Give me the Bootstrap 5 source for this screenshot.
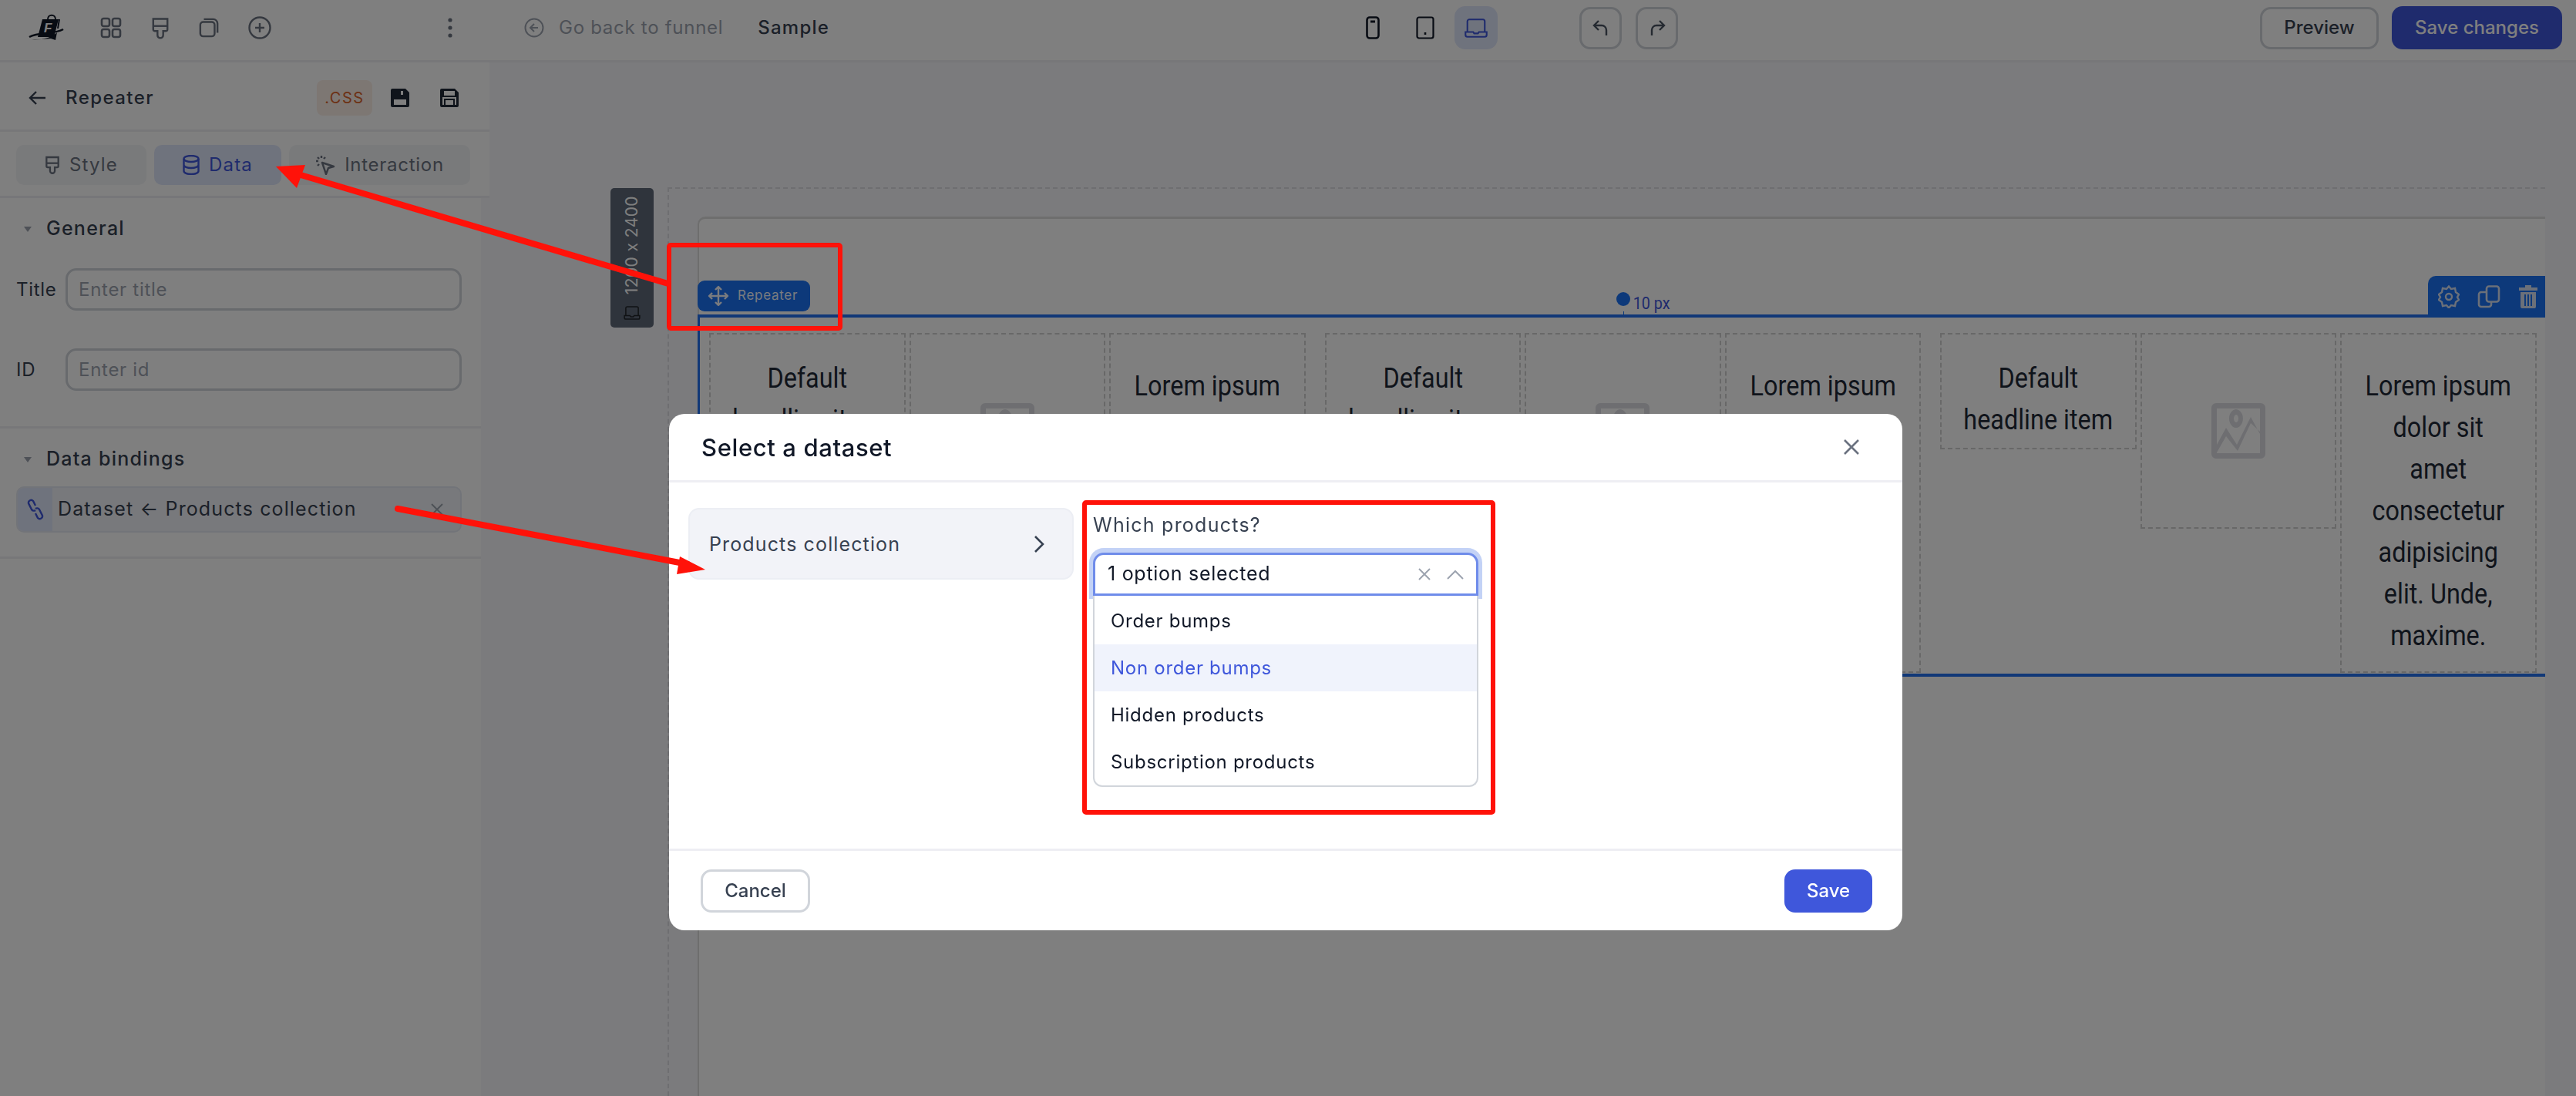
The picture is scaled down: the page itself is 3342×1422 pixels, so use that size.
<!DOCTYPE html>
<html lang="en">

<head>
    <meta charset="UTF-8">
    <meta name="viewport" content="width=device-width, initial-scale=1.0">
    <title>Repeater - Select a dataset</title>
    <link href="https://cdn.jsdelivr.net/npm/bootstrap@5.3.0/dist/css/bootstrap.min.css" rel="stylesheet">
    <style>
        html, body { height: 1422px; overflow: hidden; }
        body { font-family: Inter, "Noto Sans", sans-serif; font-size: 24px; color: #374151; letter-spacing: .03em; background: #f6f6fb; }
        svg { display: block; flex: none; }

        .top-bar { height: 81px; background: #fff; border-bottom: 3px solid #eeeef3; padding: 0 18px 6px 0; }
        .top-left { width: 1772px; padding-left: 40px; }
        .tool-icon { color: #6b7280; margin-right: 38px; }
        .logo-box { width: 90px; }
        .logo-box svg { margin-left: -10px; }
        .kebab-icon { margin-left: 229px; }
        .back-icon { margin-left: 93px; margin-right: 19px; }
        .go-back { color: #9ca3af; }
        .sample-name { font-weight: 500; margin-left: 45px; letter-spacing: .05em; }
        .device-gap { margin-right: 47px; }
        .device-on { width: 56px; height: 56px; background: #dfe6fa; border-radius: 14px; margin-left: -21px; color: #3f57db; }
        .round-btn { width: 55px; height: 55px; border: 3px solid #d1d5db; border-radius: 14px; background: #fff; color: #4b5563; padding: 0; }
        .undo-wrap { margin-left: 106px; gap: 18px; }
        .preview-btn { height: 55px; width: 154px; border: 3px solid #d1d5db; border-radius: 14px; background: #fff; color: #374151; font-size: 24px; padding: 0; font-weight: 500; }
        .save-top { height: 56px; width: 221px; border: 0; border-radius: 14px; background: #3f57db; color: #fff; font-size: 24px; padding: 0; font-weight: 500; margin-left: 17px; }

        .work-area { height: 1341px; }
        .side-panel { width: 635px; flex: none; }
        .side-row { background: #fff; border-bottom: 3px solid #eeeef3; }
        .title-row { height: 90px; padding: 4px 40px 0 37px; }
        .panel-title { margin-left: 26px; font-weight: 500; letter-spacing: .06em; }
        .css-chip { width: 72px; height: 46px; background: #fbeee6; color: #d9622a; border-radius: 8px; font-size: 20px; letter-spacing: .08em; }
        .save-one { margin-left: 24px; }
        .save-two { margin-left: 40px; }
        .tab-row { height: 86px; padding: 17px 25px 0 21px; gap: 10px; }
        .tab-item { height: 52px; border-radius: 10px; background: #f3f4f6; color: #6b7280; gap: 12px; }
        .tab-style { width: 169px; letter-spacing: .05em; }
        .tab-data { width: 165px; background: #dfe6fa; color: #3f57db; letter-spacing: .05em; }
        .tab-inter { width: 235px; }
        .side-body { width: 624px; background: #fff; height: 1165px; }
        .side-group { border-bottom: 3px solid #eeeef3; padding: 0 25px 0 21px; }
        .group-general { height: 299px; padding-top: 24px; }
        .group-data { height: 169px; padding-top: 24px; }
        .group-head { height: 32px; gap: 19px; font-size: 25px; font-weight: 500; letter-spacing: .05em; margin-bottom: 35px; }
        .group-data .group-head { margin-bottom: 19px; }
        .tri-down { width: 0; height: 0; border-left: 5px solid transparent; border-right: 5px solid transparent; border-top: 7px solid #9ca3af; margin-left: 10px; }
        .field-row { height: 55px; margin-bottom: 49px; }
        .field-label { width: 64px; flex: none; }
        .field-input { height: 55px; border: 3px solid #d1d5db; border-radius: 14px; font-size: 24px; letter-spacing: .03em; padding: 0 14px; color: #374151; }
        .field-input::placeholder { color: #9ca3af; }
        .bind-chip { height: 60px; background: #f1f3f8; border: 2px solid #e5e9f3; border-radius: 10px; overflow: hidden; }
        .bind-icon { width: 45px; background: #dfe6fa; color: #3f57db; }
        .bind-text { margin-left: 7px; font-size: 25px; letter-spacing: .045em; white-space: nowrap; }
        .bind-x { margin-left: auto; margin-right: 22px; color: #9ca3af; }

        .canvas-area { flex: 1; min-width: 0; }
        .guide-frame { margin: 162px 40px 0 231px; border-top: 2px dashed #dcdce2; border-left: 2px dashed #dcdce2; padding: 36px 0 0 37px; height: 1179px; }
        .size-tag { left: 157px; top: 163px; width: 56px; height: 181px; background: #5e6878; border-radius: 5px; color: #fff; font-size: 21px; letter-spacing: .02em; gap: 14px; padding: 12px 0; }
        .size-text { writing-mode: vertical-rl; transform: rotate(180deg); white-space: nowrap; }
        .art-board { background: #fff; border-top: 3px solid #dcdcdc; border-left: 2px solid #dcdcdc; border-top-left-radius: 10px; height: 1141px; padding-top: 124px; }
        .repeat-box { border-top: 4px solid #2371ee; border-bottom: 4px solid #2371ee; border-left: 3px solid #2371ee; margin-left: -2px; padding: 20px 11px 0 12px; height: 470px; gap: 25px; }
        .cell-group { gap: 5px; flex: none; }
        .dash-cell { width: 254.5px; flex: none; border: 2px dashed #d0d0d0; text-align: center; font-family: Roboto, sans-serif; font-size: 36px; line-height: 54px; color: #1f2937; letter-spacing: 0; align-self: flex-start; }
        .cell-lines { display: block; white-space: nowrap; transform: scaleX(.9); }
        .cell-head { padding: 30px 0 0; height: 151px; }
        .cell-image { height: 254px; }
        .cell-text { padding: 40px 0 0; height: 441px; }
        .repeater-tag { left: -3px; top: -48px; width: 146px; height: 40px; background: #1a72f5; border-radius: 9px; color: #f2f6ff; font-size: 17px; gap: 11px; padding-left: 13px; }
        .repeat-tools { right: 0; top: -54px; width: 152px; height: 54px; background: #1a72f5; border-top-left-radius: 10px; color: #d6e0f2; padding-left: 13px; gap: 23px; }
        .pad-dot { width: 18px; height: 18px; background: #1a72f5; border-radius: 50%; left: 1189px; top: -33px; }
        .pad-tick { width: 1px; height: 5px; background: #1a72f5; left: 1198px; top: -8px; }
        .pad-label { left: 1208px; top: -31px; font-size: 22px; line-height: 26px; color: #3f57db; letter-spacing: 0; font-family: Roboto, sans-serif; }

        .dim-layer { position: fixed; inset: 0; background: #000; opacity: .5; z-index: 1050; }
        .dataset-modal { display: block; overflow: hidden; }
        .dataset-dialog { max-width: 1600px; width: 1600px; margin: 537px 0 0 868px; }
        .dataset-box { border: 0; border-radius: 20px; height: 670px; }
        .dataset-head { height: 89px; border-bottom: 3px solid #eeeef3; padding: 0 55px 0 42px; }
        .dataset-title { font-size: 31px; font-weight: 500; color: #111827; letter-spacing: .02em; padding-top: 3px; }
        .dataset-main { height: 475px; padding: 33px 26px 0 25px; gap: 25px; }
        .source-item { width: 500px; height: 93px; background: #f2f3f8; border: 2px solid #eceef4; border-radius: 14px; padding: 0 36px 0 25px; font-size: 25px; letter-spacing: .045em; flex: none; }
        .source-name { padding-top: 3px; }
        .which-col { width: 500px; }
        .which-label { font-size: 25px; line-height: 30px; letter-spacing: .05em; margin-bottom: 21px; margin-top: 7px; }
        .select-focus { height: 56px; background: #fff; border: 3px solid #6f8cea; border-radius: 14px 14px 0 0; box-shadow: 0 -1px 0 5px #c3d2f6; padding: 0 16px 0 16px; color: #111827; font-size: 25px; }
        .select-x { color: #9ca3af; margin-left: auto; }
        .select-up { color: #9ca3af; margin-left: 21px; }
        .option-list { border: 2px solid #d1d5db; border-top: 0; border-radius: 0 0 12px 12px; background: #fff; overflow: hidden; position: relative; z-index: 1; padding-top: 2px; }
        .option-row { height: 61px; padding-left: 21px; font-size: 24px; color: #111827; }
        .option-row.is-active { background: #f0f3fc; color: #3f57db; }
        .dataset-foot { height: 106px; border-top: 3px solid #eeeef3; padding: 0 39px 0 41px; }
        .cancel-btn { width: 142px; height: 56px; border: 3px solid #d1d5db; border-radius: 14px; background: #fff; color: #374151; font-size: 24px; padding: 0; font-weight: 500; }
        .save-btn { width: 114px; height: 56px; border: 0; border-radius: 14px; background: #3f57db; color: #fff; font-size: 24px; padding: 0; font-weight: 500; }
        .note-layer { position: fixed; left: 0; top: 0; z-index: 1060; pointer-events: none; }
    </style>
</head>

<body>
    <svg width="0" height="0" class="position-absolute">
        <symbol id="image-ph" viewBox="0 0 70 72">
            <path fill="#dcdde3" fill-rule="evenodd" d="M6 0h58a6 6 0 0 1 6 6v60a6 6 0 0 1-6 6H6a6 6 0 0 1-6-6V6a6 6 0 0 1 6-6zM7 7v47l12-22 14 22 18-36 12 22V7zM7 65h56v-28L51 26 34 62 19 43 7 64zM32 8a9 12 0 1 1-.1 0zm0 7a3 5 0 1 0 .1 0z" />
        </symbol>
        <symbol id="laptop-ic" viewBox="0 0 24 20">
            <path fill="none" stroke="currentColor" stroke-width="1.700" d="M3 14V3a2 2 0 0 1 2-2h14a2 2 0 0 1 2 2v11M1 14h8l1 1.500h4l1-1.500h8v3a2 2 0 0 1-2 2H3a2 2 0 0 1-2-2z" />
        </symbol>
    </svg>

    <header class="top-bar d-flex align-items-center">
        <div class="top-left d-flex align-items-center">
            <div class="logo-box">
                <svg width="60" height="48" viewBox="0 0 60 48" fill="none">
                    <path d="M25 13h21l-6 23H19z" fill="#111827" />
                    <path d="M32 13c0-7 10-7 10 0" stroke="#111827" stroke-width="2" />
                    <text x="27" y="30" font-family="Liberation Sans, sans-serif" font-size="17" font-weight="700" font-style="italic" fill="#fff">F</text>
                    <path d="M8 36c12-7 32-3 44-10" stroke="#111827" stroke-width="2.600" />
                    <path d="M11 40c10 0 25-2 33-10l-2 10-6-2z" fill="#111827" />
                    <path d="M47 13l-2 12" stroke="#111827" stroke-width="2" />
                </svg>
            </div>
            <svg class="tool-icon" width="28" height="28" viewBox="0 0 28 28" fill="none" stroke="currentColor" stroke-width="2.600"><rect x="2" y="2" width="10" height="10" rx="2.500" /><rect x="16" y="2" width="10" height="10" rx="2.500" /><rect x="2" y="16" width="10" height="10" rx="2.500" /><rect x="16" y="16" width="10" height="10" rx="2.500" /></svg>
            <svg class="tool-icon" width="24" height="29" viewBox="0 0 26 30" fill="none" stroke="currentColor" stroke-width="2.600"><path d="M3 2h20v15a2 2 0 0 1-2 2h-4v6a4 4 0 0 1-8 0v-6H5a2 2 0 0 1-2-2z" /><path d="M3 12h20" /></svg>
            <svg class="tool-icon" width="26" height="28" viewBox="0 0 28 28" fill="none" stroke="currentColor" stroke-width="2.600"><rect x="2" y="6" width="20" height="20" rx="4" /><path d="M7 2h13a6 6 0 0 1 6 6v13" /></svg>
            <svg width="30" height="30" viewBox="0 0 30 30" fill="none" stroke="#6b7280" stroke-width="2.400"><circle cx="15" cy="15" r="13.500" /><path d="M15 9v12M9 15h12" /></svg>
            <svg class="kebab-icon" width="6" height="26" viewBox="0 0 6 26" fill="#6b7280"><circle cx="3" cy="3" r="2.600" /><circle cx="3" cy="13" r="2.600" /><circle cx="3" cy="23" r="2.600" /></svg>
            <svg class="back-icon" width="26" height="26" viewBox="0 0 26 26" fill="none" stroke="#9ca3af" stroke-width="2"><circle cx="13" cy="13" r="11.500" /><path d="M13 8l-5 5 5 5M8 13h10" /></svg>
            <span class="go-back">Go back to funnel</span>
            <span class="sample-name">Sample</span>
        </div>
        <svg class="device-gap" width="18" height="30" viewBox="0 0 18 30" fill="none" stroke="#111827" stroke-width="2.600"><rect x="1.500" y="1.500" width="15" height="27" rx="3.500" /><path d="M6 7h6" stroke-width="3" /></svg>
        <svg class="device-gap" width="24" height="30" viewBox="0 0 24 30" fill="none" stroke="#111827" stroke-width="2.200"><rect x="1.500" y="1.500" width="21" height="27" rx="2.500" /><path d="M12 21v3" stroke-width="2.600" /></svg>
        <div class="device-on d-flex align-items-center justify-content-center">
            <svg width="30" height="25"><use href="#laptop-ic" /></svg>
        </div>
        <div class="undo-wrap d-flex">
            <button class="round-btn d-flex align-items-center justify-content-center"><svg width="24" height="24" viewBox="0 0 24 24" fill="none" stroke="currentColor" stroke-width="2.400"><path d="M9 3L3 9l6 6M3 9h10a6 6 0 0 1 6 6v7" /></svg></button>
            <button class="round-btn d-flex align-items-center justify-content-center"><svg width="24" height="24" viewBox="0 0 24 24" fill="none" stroke="currentColor" stroke-width="2.400"><path d="M15 3l6 6-6 6M21 9H11a6 6 0 0 0-6 6v7" /></svg></button>
        </div>
        <button class="preview-btn ms-auto">Preview</button>
        <button class="save-top">Save changes</button>
    </header>

    <div class="work-area d-flex">
        <aside class="side-panel">
            <div class="side-row title-row d-flex align-items-center">
                <svg width="22" height="20" viewBox="0 0 22 20" fill="none" stroke="#374151" stroke-width="2.400"><path d="M10 2l-8 8 8 8M2 10h20" /></svg>
                <span class="panel-title">Repeater</span>
                <span class="css-chip d-flex align-items-center justify-content-center ms-auto">.CSS</span>
                <svg class="save-one" width="24" height="24" viewBox="0 0 24 24" fill="#1f2937"><path fill-rule="evenodd" d="M2 0h17l5 5v17a2 2 0 0 1-2 2H2a2 2 0 0 1-2-2V2a2 2 0 0 1 2-2zM4 14v7h16v-7zM13 3v5h3V3z" /></svg>
                <svg class="save-two" width="24" height="24" viewBox="0 0 24 24" fill="#1f2937"><path fill-rule="evenodd" d="M2 0h17l5 5v17a2 2 0 0 1-2 2H2a2 2 0 0 1-2-2V2a2 2 0 0 1 2-2zM5 3v6h14V3zM3 11v10h2v-8h14v8h2V11zM7 15v6h10v-6z" /></svg>
            </div>
            <div class="side-row tab-row d-flex">
                <div class="tab-item tab-style d-flex align-items-center justify-content-center">
                    <svg width="20" height="24" viewBox="0 0 26 30" fill="none" stroke="currentColor" stroke-width="3"><path d="M3 2h20v15a2 2 0 0 1-2 2h-4v6a4 4 0 0 1-8 0v-6H5a2 2 0 0 1-2-2z" /><path d="M3 12h20" /></svg>
                    Style
                </div>
                <div class="tab-item tab-data d-flex align-items-center justify-content-center">
                    <svg width="22" height="26" viewBox="0 0 22 26" fill="none" stroke="currentColor" stroke-width="2.400"><ellipse cx="11" cy="5" rx="9.500" ry="4" /><path d="M1.500 5v16c0 2.200 4.300 4 9.500 4s9.500-1.800 9.500-4V5M1.500 13c0 2.200 4.300 4 9.500 4s9.500-1.800 9.500-4" /></svg>
                    Data
                </div>
                <div class="tab-item tab-inter d-flex align-items-center justify-content-center">
                    <svg width="26" height="26" viewBox="0 0 26 26" fill="none" stroke="currentColor" stroke-width="2.400" stroke-linejoin="round"><path d="M9 10l15 5-7 2-3 8z" /><path d="M8 1v3M1 8h3M3 3l2 2M13 3l-2 2M3 14l2-2" /></svg>
                    Interaction
                </div>
            </div>
            <div class="side-body">
                <div class="side-group group-general">
                    <div class="group-head d-flex align-items-center"><span class="tri-down"></span>General</div>
                    <div class="field-row d-flex align-items-center">
                        <label class="field-label">Title</label>
                        <input class="form-control field-input" placeholder="Enter title">
                    </div>
                    <div class="field-row d-flex align-items-center">
                        <label class="field-label">ID</label>
                        <input class="form-control field-input" placeholder="Enter id">
                    </div>
                </div>
                <div class="side-group group-data">
                    <div class="group-head d-flex align-items-center"><span class="tri-down"></span>Data bindings</div>
                    <div class="bind-chip d-flex align-items-stretch">
                        <div class="bind-icon d-flex align-items-center justify-content-center">
                            <svg width="22" height="30" viewBox="0 0 22 30" fill="none" stroke="currentColor" stroke-width="2.400"><path d="M11 10L8 4a3.500 3.500 0 0 0-6 3l4 8a3.500 3.500 0 0 0 5 1" /><path d="M11 20l3 6a3.500 3.500 0 0 0 6-3l-4-8a3.500 3.500 0 0 0-5-1" /></svg>
                        </div>
                        <div class="bind-text d-flex align-items-center">Dataset ← Products collection</div>
                        <div class="bind-x d-flex align-items-center">
                            <svg width="16" height="16" viewBox="0 0 16 16" fill="none" stroke="currentColor" stroke-width="2"><path d="M1 1l14 14M15 1L1 15" /></svg>
                        </div>
                    </div>
                </div>
            </div>
        </aside>

        <main class="canvas-area position-relative">
            <div class="size-tag position-absolute d-flex flex-column align-items-center justify-content-center">
                <span class="size-text">1200 x 2400</span>
                <svg width="22" height="18" class="text-dark"><use href="#laptop-ic" /></svg>
            </div>
            <div class="guide-frame">
                <div class="art-board">
                    <div class="repeat-box d-flex position-relative">
                        <div class="repeater-tag position-absolute d-flex align-items-center">
                            <svg width="28" height="28" viewBox="0 0 28 28" fill="none" stroke="currentColor" stroke-width="2.400" stroke-linejoin="round"><path d="M14 3v22M3 14h22M10 6l4-4 4 4M10 22l4 4 4-4M6 10l-4 4 4 4M22 10l4 4-4 4" /></svg>
                            Repeater
                        </div>
                        <span class="pad-dot position-absolute"></span>
                        <span class="pad-tick position-absolute"></span>
                        <span class="pad-label position-absolute"><span class="cell-lines">10 px</span></span>
                        <div class="repeat-tools position-absolute d-flex align-items-center">
                            <svg width="28" height="30" viewBox="0 0 28 30" fill="none" stroke="currentColor" stroke-width="2.400"><path d="M14 1.500l3 3.500 5-1 1 5 4 3-2 3.500 2 3.500-4 3-1 5-5-1-3 3.500-3-3.500-5 1-1-5-4-3 2-3.500-2-3.500 4-3 1-5 5 1z" /><circle cx="14" cy="15" r="4" /></svg>
                            <svg width="30" height="30" viewBox="0 0 30 30" fill="none" stroke="currentColor" stroke-width="2.600"><rect x="12" y="1.500" width="16" height="20" rx="3" /><path d="M12 9H5a3 3 0 0 0-3 3v13a3 3 0 0 0 3 3h10a3 3 0 0 0 3-3v-3" /></svg>
                            <svg width="26" height="30" viewBox="0 0 26 30" fill="currentColor"><path d="M9 0h8v3h8v4H1V3h8z" /><path d="M3 9h20v19a2 2 0 0 1-2 2H5a2 2 0 0 1-2-2zM8 12v15h2V12zm4 0v15h2V12zm4 0v15h2V12z" fill-rule="evenodd" /></svg>
                        </div>

                        <div class="cell-group d-flex">
                            <div class="dash-cell cell-head"><span class="cell-lines">Default<br>headline item</span></div>
                            <div class="dash-cell cell-image d-flex align-items-center justify-content-center"><svg width="70" height="72"><use href="#image-ph" /></svg></div>
                            <div class="dash-cell cell-text"><span class="cell-lines">Lorem ipsum<br>dolor sit<br>amet<br>consectetur<br>adipisicing<br>elit. Unde,<br>maxime.</span></div>
                        </div>
                        <div class="cell-group d-flex">
                            <div class="dash-cell cell-head"><span class="cell-lines">Default<br>headline item</span></div>
                            <div class="dash-cell cell-image d-flex align-items-center justify-content-center"><svg width="70" height="72"><use href="#image-ph" /></svg></div>
                            <div class="dash-cell cell-text"><span class="cell-lines">Lorem ipsum<br>dolor sit<br>amet<br>consectetur<br>adipisicing<br>elit. Unde,<br>maxime.</span></div>
                        </div>
                        <div class="cell-group d-flex">
                            <div class="dash-cell cell-head"><span class="cell-lines">Default<br>headline item</span></div>
                            <div class="dash-cell cell-image d-flex align-items-center justify-content-center"><svg width="70" height="72"><use href="#image-ph" /></svg></div>
                            <div class="dash-cell cell-text"><span class="cell-lines">Lorem ipsum<br>dolor sit<br>amet<br>consectetur<br>adipisicing<br>elit. Unde,<br>maxime.</span></div>
                        </div>
                    </div>
                </div>
            </div>
        </main>
    </div>

    <div class="dim-layer"></div>

    <div class="modal dataset-modal">
        <div class="modal-dialog dataset-dialog">
            <div class="modal-content dataset-box">
                <div class="dataset-head d-flex align-items-center justify-content-between">
                    <span class="dataset-title">Select a dataset</span>
                    <svg width="22" height="22" viewBox="0 0 22 22" fill="none" stroke="#6b7280" stroke-width="2.600"><path d="M2 2l18 18M20 2L2 20" /></svg>
                </div>
                <div class="dataset-main d-flex">
                    <div class="source-item d-flex align-items-center justify-content-between">
                        <span class="source-name">Products collection</span>
                        <svg width="14" height="24" viewBox="0 0 14 24" fill="none" stroke="#374151" stroke-width="2.600"><path d="M2 2l10 10L2 22" /></svg>
                    </div>
                    <div class="which-col">
                        <div class="which-label">Which products?</div>
                        <div class="select-focus d-flex align-items-center">
                            1 option selected
                            <svg class="select-x" width="16" height="16" viewBox="0 0 16 16" fill="none" stroke="currentColor" stroke-width="2"><path d="M1 1l14 14M15 1L1 15" /></svg>
                            <svg class="select-up" width="22" height="13" viewBox="0 0 22 13" fill="none" stroke="currentColor" stroke-width="2"><path d="M1 12L11 2l10 10" /></svg>
                        </div>
                        <div class="option-list">
                            <div class="option-row d-flex align-items-center">Order bumps</div>
                            <div class="option-row is-active d-flex align-items-center">Non order bumps</div>
                            <div class="option-row d-flex align-items-center">Hidden products</div>
                            <div class="option-row d-flex align-items-center">Subscription products</div>
                        </div>
                    </div>
                </div>
                <div class="dataset-foot d-flex align-items-center justify-content-between">
                    <button class="cancel-btn">Cancel</button>
                    <button class="save-btn">Save</button>
                </div>
            </div>
        </div>
    </div>

    <!-- red annotations drawn over the screenshot -->
    <svg class="note-layer" width="3342" height="1422" viewBox="0 0 3342 1422" fill="none">
        <rect x="868" y="318" width="222" height="108" stroke="#ff1209" stroke-width="6" rx="2" />
        <rect x="1407" y="652" width="530" height="402" stroke="#ff1209" stroke-width="6" rx="2" />
        <path d="M870 369L380 224" stroke="#ff1209" stroke-width="8" />
        <path d="M358 216L396 214L385 244z" fill="#ff1209" />
        <path d="M516 660L892 732" stroke="#ff1209" stroke-width="8" stroke-linecap="round" />
        <path d="M915 739L882 722L878 745z" fill="#ff1209" />
    </svg>
</body>

</html>
